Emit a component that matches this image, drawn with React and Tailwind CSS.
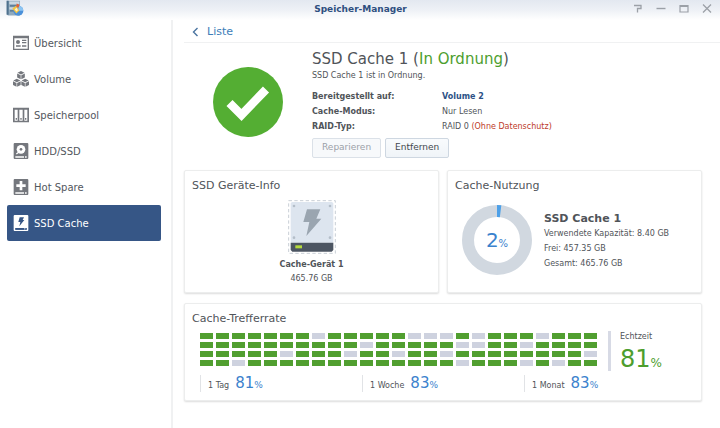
import React from 'react';

const NAV_ITEMS = [
  { label: 'Übersicht', icon: OverviewIcon },
  { label: 'Volume', icon: VolumeIcon },
  { label: 'Speicherpool', icon: PoolIcon },
  { label: 'HDD/SSD', icon: DiskIcon },
  { label: 'Hot Spare', icon: SpareIcon },
  { label: 'SSD Cache', icon: CacheIcon, active: true },
];

// One character per sample: "1" is a hit, "0" is a miss.
const HIT_ROWS = [
  '1111111011111000101110111',
  '1111111111011111001101111',
  '1111101110110110111111110',
  '1101111111111111011101011',
];

const PERIODS = [
  { label: '1 Tag', value: 81 },
  { label: '1 Woche', value: 83 },
  { label: '1 Monat', value: 83 },
];

function OverviewIcon() {
  return (
    <svg viewBox="0 0 48 48" className="size-4" aria-hidden="true">
      <path fill="currentColor" fillRule="evenodd" d="M0 2h48v43H0zM4 10v31h40V10z" />
      <circle cx="15" cy="21" r="6" fill="currentColor" />
      <path fill="currentColor" d="M27 14h13v4H27zM27 21h13v4H27zM9 31h14v4H9zM27 31h13v4H27z" />
    </svg>
  );
}

function Cube({ x, y }) {
  return (
    <g transform={`translate(${x} ${y})`} fill="currentColor">
      <path d="M12 0l11 5.500-11 5.500L1 5.500z" />
      <path d="M0 8l11 5.500v12L0 20zM24 8l-11 5.500v12L24 20z" />
    </g>
  );
}

function VolumeIcon() {
  return (
    <svg viewBox="0 0 50 50" className="size-4" aria-hidden="true">
      <Cube x={13} y={0} />
      <Cube x={0} y={24} />
      <Cube x={26} y={24} />
    </svg>
  );
}

function PoolIcon() {
  return (
    <svg viewBox="0 0 48 48" className="size-4" aria-hidden="true">
      <path
        fill="currentColor"
        fillRule="evenodd"
        d="M0 2h48v44H0zM5 8v33h9V8zM19 8v33h10V8zM34 8v33h9V8z"
      />
      <path fill="currentColor" d="M8 33h4v5H8zM22 33h4v5h-4zM36 33h4v5h-4z" />
    </svg>
  );
}

function DiskBody({ children }) {
  return (
    <svg viewBox="0 0 48 48" className="size-4" aria-hidden="true">
      <path
        fill="currentColor"
        fillRule="evenodd"
        d="M4 0h40l2 2v44l-2 2H4l-2-2V2zM7 40v4h26v-4zM36 40v4h5v-4z"
      />
      {children}
    </svg>
  );
}

function DiskIcon() {
  return (
    <DiskBody>
      <circle cx="24" cy="19" r="13" fill="#fff" />
      <circle cx="24" cy="19" r="4" fill="currentColor" />
      <path d="M10 33l8-6" stroke="#fff" strokeWidth="4" />
    </DiskBody>
  );
}

function SpareIcon() {
  return (
    <DiskBody>
      <path fill="#fff" d="M20 6h8v10h10v8H28v10h-8V24H10v-8h10z" />
    </DiskBody>
  );
}

function CacheIcon() {
  return (
    <DiskBody>
      <path fill="#365686" d="M20 7h13l-4 8h5L19 34l3-13h-6zM7 39h34v5H7z" />
      <path fill="#fff" d="M34 40h3v3h-3z" />
    </DiskBody>
  );
}

function AppLogo() {
  return (
    <svg viewBox="0 0 54 50" className="h-[17px] w-[18px]" aria-hidden="true">
      <path fill="#8fa9bd" d="M2 2h40v44H6l-4-4z" />
      <path fill="#4f718e" d="M2 2h6v42H2zM12 15h26v4H12zM12 30h20v4H12z" />
      <path fill="#c9d8e3" d="M10 4h30v8H10zM10 21h14v7H10z" />
      <circle cx="37" cy="32" r="15" fill="#4a90d9" />
      <path fill="#8cc4f2" d="M37 17a15 15 0 0 1 15 15H37z" />
      <path fill="#f3c443" d="M19 25l12-9 9 15-9 9z" />
      <path fill="#e2603a" d="M32 10l8 4-2 9-7-3z" />
      <path fill="#f7efd2" d="M26 27l6-4 4 7-5 4z" />
    </svg>
  );
}

function DriveIllustration() {
  return (
    <svg viewBox="0 0 144 162" className="h-[54px] w-12" aria-hidden="true">
      <rect x="2" y="2" width="140" height="158" fill="none" stroke="#c9cfd6" strokeWidth="3" strokeDasharray="10 7" />
      <path fill="#dde5ef" d="M12 6h120l4 4v118H8V10z" />
      <path fill="#4c5562" d="M8 128h128v22l-5 5H13l-5-5z" />
      <rect x="22" y="136" width="20" height="9" fill="#b5da3d" />
      <path fill="#9aa5b0" d="M57 28h40L85 56h15l-45 52 9-42H46z" />
      <g fill="#b4bec9">
        <circle cx="18" cy="18" r="4" />
        <circle cx="126" cy="18" r="4" />
        <circle cx="18" cy="113" r="4" />
        <circle cx="126" cy="113" r="4" />
      </g>
    </svg>
  );
}

function WindowControls() {
  const button = 'flex size-4 items-center justify-center';
  const svg = { viewBox: '0 0 12 12', className: 'size-3', fill: 'none', stroke: '#9ba0a7', 'aria-hidden': true };
  return (
    <div className="flex gap-[7px]">
      <button type="button" aria-label="Hilfe" className={button}>
        <svg {...svg} strokeWidth="1.3"><path d="M2 3.500h7v3H5.500v4" /></svg>
      </button>
      <button type="button" aria-label="Minimieren" className={button}>
        <svg {...svg} strokeWidth="1.4"><path d="M1.500 6.500h9" /></svg>
      </button>
      <button type="button" aria-label="Maximieren" className={button}>
        <svg {...svg} strokeWidth="1.2"><path d="M2 3.500h8v6.500H2zM2 4.500h8" /></svg>
      </button>
      <button type="button" aria-label="Schließen" className={button}>
        <svg {...svg} strokeWidth="1.3"><path d="M2 2.500l8 8M10 2.500l-8 8" /></svg>
      </button>
    </div>
  );
}

function Card({ title, className = '', children }) {
  return (
    <section className={`rounded-xs border border-[#eceded] bg-white shadow-[0_1px_2px_rgba(0,0,0,0.14)] ${className}`}>
      <h2 className="px-[7px] pt-2 text-[11px] leading-[14px]">{title}</h2>
      {children}
    </section>
  );
}

function Sidebar() {
  return (
    <nav className="w-[173px] shrink-0 border-r-2 border-[#f0f1f2] pt-[5px] pr-2.5 pl-[7px]">
      <ul>
        {NAV_ITEMS.map(({ label, icon: Icon, active }) => (
          <li key={label}>
            <a
              href="#"
              aria-current={active ? 'page' : undefined}
              className={`flex h-9 items-center gap-[5px] rounded-xs pl-1.5 text-[10px] ${
                active ? 'bg-[#365686] text-white' : 'text-[#53575d]'
              }`}
            >
              <span className={active ? 'text-white' : 'text-[#74777d]'}>
                <Icon />
              </span>
              {label}
            </a>
          </li>
        ))}
      </ul>
    </nav>
  );
}

function Summary() {
  return (
    <section className="flex gap-[29px] pt-1.5 pl-[29px]">
      <svg viewBox="0 0 70 70" className="mt-[18px] size-[70px] shrink-0" role="img" aria-label="In Ordnung">
        <circle cx="35" cy="35" r="35" fill="#54ae33" />
        <path d="M16.500 36L28.500 48L53 22.500" fill="none" stroke="#fff" strokeWidth="8.500" />
      </svg>
      <div>
        <h1 className="text-[15px] leading-5">
          SSD Cache 1 (<span className="text-[#4d9e2e]">In Ordnung</span>)
        </h1>
        <p className="leading-[14px]">SSD Cache 1 ist in Ordnung.</p>
        <dl className="mt-1.5 grid grid-cols-[130px_auto] leading-[15px]">
          <dt className="font-bold">Bereitgestellt auf:</dt>
          <dd>
            <a href="#" className="font-bold text-[#2c5286]">Volume 2</a>
          </dd>
          <dt className="font-bold">Cache-Modus:</dt>
          <dd>Nur Lesen</dd>
          <dt className="font-bold">RAID-Typ:</dt>
          <dd>
            RAID 0 <span className="text-[#bd3b2a]">(Ohne Datenschutz)</span>
          </dd>
        </dl>
        <div className="mt-1 flex gap-1 text-[9px]">
          <button type="button" disabled className="h-5 rounded-xs border border-[#dbe1e8] bg-[#f7f9fb] px-[9px] text-[#9ba1a8]">
            Reparieren
          </button>
          <button type="button" className="h-5 rounded-xs border border-[#ced7e1] bg-linear-to-b from-[#f9fbfd] to-[#f0f4f8] px-[9px] text-[#42474e]">
            Entfernen
          </button>
        </div>
      </div>
    </section>
  );
}

function UsageRing({ percent }) {
  return (
    <div className="grid size-[70px] shrink-0 place-items-center">
      <svg viewBox="0 0 70 70" className="col-start-1 row-start-1 size-full" aria-hidden="true">
        <circle cx="35" cy="35" r="29" fill="none" stroke="#d1d8e0" strokeWidth="12" />
        <circle
          cx="35"
          cy="35"
          r="29"
          fill="none"
          stroke="#4da0e8"
          strokeWidth="12"
          pathLength="100"
          strokeDasharray={`${percent} 100`}
          transform="rotate(-90 35 35)"
        />
      </svg>
      <p className="col-start-1 row-start-1 text-xl leading-none text-[#3b82cd]">
        {percent}
        <span className="text-[10px]">%</span>
      </p>
    </div>
  );
}

function HitRate() {
  return (
    <Card title="Cache-Trefferrate" className="mt-2.5 pb-2">
      <div className="mt-[5px] flex gap-[11px] pl-[15px]">
        <div className="mt-0.5 grid flex-1 gap-[3px] self-start">
          {HIT_ROWS.map((row) => (
            <div key={row} className="flex gap-[3px]">
              {[...row].map((hit, i) => (
                <span key={i} className={`h-1.5 flex-1 ${hit === '1' ? 'bg-[#519f30]' : 'bg-[#ced2df]'}`} />
              ))}
            </div>
          ))}
        </div>
        <div className="w-[93px] border-l-3 border-[#d7dae5] pl-[9px]">
          <p className="leading-3">Echtzeit</p>
          <p className="pt-1 text-2xl leading-6 text-[#4d9e2e]">
            81<span className="text-xs">%</span>
          </p>
        </div>
      </div>
      <ul className="mt-1 grid grid-cols-3 px-[15px]">
        {PERIODS.map(({ label, value }) => (
          <li key={label} className="flex h-[17px] items-baseline gap-1.5 border-l border-[#e1e3e6] pl-[7px] leading-[17px]">
            {label}
            <span className="text-[15px] text-[#3b82cd]">
              {value}
              <span className="text-[9px]">%</span>
            </span>
          </li>
        ))}
      </ul>
    </Card>
  );
}

export default function App() {
  return (
    <div className="flex min-h-screen flex-col bg-white font-['Verdana','DejaVu_Sans',sans-serif] text-[8px] text-[#505459]">
      <header className="grid h-5 grid-cols-[1fr_auto_1fr] items-start bg-linear-to-b from-[#e3e8f0] via-[#eef1f6] to-white pr-[5px] pl-1.5">
        <AppLogo />
        <p className="text-[9px] leading-[18px] font-bold text-[#2f4f80]">Speicher-Manager</p>
        <div className="justify-self-end">
          <WindowControls />
        </div>
      </header>
      <div className="flex flex-1">
        <Sidebar />
        <main className="min-w-0 flex-1 pl-[11px]">
          <div className="flex h-[23px] items-center border-b border-[#f0f1f2] pt-0.5 pl-2 text-[11px] text-[#3d7db8]">
            <a href="#" className="flex items-center gap-2">
              <svg viewBox="0 0 7 10" className="h-2.5 w-[7px]" fill="none" stroke="#4a74a0" strokeWidth="1.4" aria-hidden="true">
                <path d="M5.500 1L1.500 5l4 4" />
              </svg>
              Liste
            </a>
          </div>
          <div className="pr-[18px]">
            <Summary />
            <div className="mt-3 grid grid-cols-2 gap-2">
              <Card title="SSD Geräte-Info" className="h-[123px]">
                <div className="flex flex-col items-center pt-[7px] leading-[14px]">
                  <DriveIllustration />
                  <p className="mt-1 font-bold">Cache-Gerät 1</p>
                  <p>465.76 GB</p>
                </div>
              </Card>
              <Card title="Cache-Nutzung" className="h-[123px]">
                <div className="flex items-center gap-3 pt-3 pl-3.5">
                  <UsageRing percent={2} />
                  <div className="pt-0.5 leading-[15px]">
                    <h3 className="text-[11px] font-bold">SSD Cache 1</h3>
                    <p>Verwendete Kapazität: 8.40 GB</p>
                    <p>Frei: 457.35 GB</p>
                    <p>Gesamt: 465.76 GB</p>
                  </div>
                </div>
              </Card>
            </div>
            <HitRate />
          </div>
        </main>
      </div>
    </div>
  );
}
